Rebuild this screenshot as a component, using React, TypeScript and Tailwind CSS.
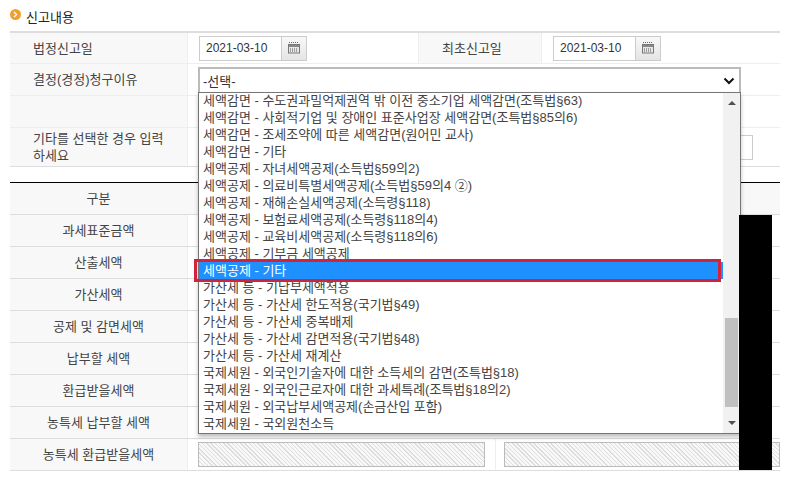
import React from 'react'

const options = [
	'세액감면 - 수도권과밀억제권역 밖 이전 중소기업 세액감면(조특법§63)',
	'세액감면 - 사회적기업 및 장애인 표준사업장 세액감면(조특법§85의6)',
	'세액감면 - 조세조약에 따른 세액감면(원어민 교사)',
	'세액감면 - 기타',
	'세액공제 - 자녀세액공제(소득법§59의2)',
	'세액공제 - 의료비특별세액공제(소득법§59의4 ②)',
	'세액공제 - 재해손실세액공제(소득령§118)',
	'세액공제 - 보험료세액공제(소득령§118의4)',
	'세액공제 - 교육비세액공제(소득령§118의6)',
	'세액공제 - 기부금 세액공제',
	'세액공제 - 기타',
	'가산세 등 - 기납부세액적용',
	'가산세 등 - 가산세 한도적용(국기법§49)',
	'가산세 등 - 가산세 중복배제',
	'가산세 등 - 가산세 감면적용(국기법§48)',
	'가산세 등 - 가산세 재계산',
	'국제세원 - 외국인기술자에 대한 소득세의 감면(조특법§18)',
	'국제세원 - 외국인근로자에 대한 과세특례(조특법§18의2)',
	'국제세원 - 외국납부세액공제(손금산입 포함)',
	'국제세원 - 국외원천소득',
]

const amountRows = ['과세표준금액', '산출세액', '가산세액', '공제 및 감면세액', '납부할 세액', '환급받을세액', '농특세 납부할 세액']

const CalendarIcon = () => (
	<svg width="12" height="12" viewBox="0 0 12 12" fill="none">
		<path d="M1 0.5h10" stroke="#666" strokeDasharray="1 1" />
		<rect x="0.5" y="2.5" width="11" height="8.5" fill="#e8e8e8" stroke="#777" />
		<rect x="1" y="3" width="10" height="2" fill="#888" />
		<path d="M2 7h8M2 9h8" stroke="#555" strokeDasharray="1 1" />
	</svg>
)

const DateField = () => (
	<div className="flex h-[25px]">
		<div className="flex w-[83px] items-center border border-[#ccc] bg-white pl-[6px] text-[12px] text-[#333]">2021-03-10</div>
		<div className="flex w-[25px] items-center justify-center border border-l-0 border-[#ccc] bg-[linear-gradient(#f8f8f8,#e4e4e4)]">
			<CalendarIcon />
		</div>
	</div>
)

const Label = ({ children, className = '' }: { children?: React.ReactNode; className?: string }) => (
	<div className={`flex items-center bg-[#f8f8f8] text-[#444] ${className}`}>{children}</div>
)

export default function App() {
	return (
		<div className="relative h-[480px] w-[786px] overflow-hidden bg-white font-['Liberation_Sans','Noto_Sans_CJK_KR',sans-serif] text-[13px] leading-[17px]">
			{/* Title */}
			<div className="flex h-[31px] items-center pl-[10px] pt-[3px] text-[#222]">
				<span className="-mt-[5px] flex h-[11px] w-[11px] items-center justify-center rounded-full bg-[#f0a030]">
					<svg width="7" height="7" viewBox="0 0 7 7" fill="none">
						<path d="M2 1l2.5 2.5L2 6" stroke="#fff" strokeWidth="1.4" />
					</svg>
				</span>
				<span className="ml-[5px]">신고내용</span>
			</div>

			{/* Report form */}
			<div className="ml-[10px] w-[770px] border-t-2 border-[#ddd]">
				<div className="flex h-[31px] border-b border-[#eee]">
					<Label className="w-[177px] pl-[23px]">법정신고일</Label>
					<div className="flex w-[231px] items-center border-l border-[#eee] pl-[11px]">
						<DateField />
					</div>
					<Label className="w-[123px] border-l border-[#eee] pl-[23px]">최초신고일</Label>
					<div className="flex flex-1 items-center border-l border-[#eee] pl-[11px]">
						<DateField />
					</div>
				</div>
				<div className="flex h-[32px] border-b border-[#eee]">
					<Label className="w-[177px] pl-[23px]">결정(경정)청구이유</Label>
					<div className="flex flex-1 items-center border-l border-[#eee] pl-[10px]" />
				</div>
				<div className="flex h-[32px] border-b border-[#eee]">
					<Label className="w-[177px]" />
					<div className="flex-1 border-l border-[#eee]" />
				</div>
				<div className="flex h-[39px] border-b border-[#ddd]">
					<Label className="w-[177px] px-[23px]">기타를 선택한 경우 입력하세요</Label>
					<div className="flex flex-1 items-center border-l border-[#eee] pl-[10px]">
						<div className="h-[25px] w-[555px] border border-[#ccc] bg-white" />
					</div>
				</div>
			</div>

			{/* Amount table */}
			<div className="ml-[10px] mt-[15px] w-[770px] border-t border-black">
				<div className="flex h-[32px] border-b border-[#ddd]">
					<Label className="w-[177px] justify-center">구분</Label>
					<div className="flex-1 bg-[#f8f8f8]" />
				</div>
				{amountRows.map((name) => (
					<div key={name} className="flex h-[32px] border-b border-[#ddd]">
						<Label className="w-[177px] justify-center">{name}</Label>
						<div className="flex-1 border-l border-[#eee]" />
					</div>
				))}
				<div className="flex h-[32px] border-b border-[#ddd]">
					<Label className="w-[177px] justify-center">농특세 환급받을세액</Label>
					<div className="flex flex-1 items-center border-l border-[#eee] pl-[10px]">
						<div className="h-[25px] w-[287px] border border-[#bbb] bg-[repeating-linear-gradient(45deg,#ddd_0,#ddd_1px,#f8f8f8_1px,#f8f8f8_3px)]" />
						<div className="ml-[10px] h-full border-l border-[#eee]" />
						<div className="ml-[8px] h-[25px] flex-1 border border-[#bbb] bg-[repeating-linear-gradient(45deg,#ddd_0,#ddd_1px,#f8f8f8_1px,#f8f8f8_3px)]" />
					</div>
				</div>
			</div>

			{/* Open select */}
			<div className="absolute left-[198px] top-[67px] flex h-[26px] w-[543px] items-center justify-between border-2 border-b-0 border-[#bbb] bg-white pl-[3px] pr-[4px] text-[#333]">
				<span>-선택-</span>
				<svg width="12" height="8" viewBox="0 0 12 8" fill="none">
					<path d="M1.5 1.5L6 6l4.5-4.5" stroke="#111" strokeWidth="2" />
				</svg>
			</div>
			<div className="absolute left-[198px] top-[92px] flex h-[342px] w-[543px] border border-[#767676] bg-white shadow-[0_3px_4px_rgba(0,0,0,0.25)]">
				<div className="w-[524px] overflow-hidden">
					{options.map((option, i) => (
						<div
							key={option}
							className={`h-[17px] whitespace-nowrap pl-[4px] leading-[17px] first:-mt-[1px] ${i === 10 ? 'bg-[#1e90ff] text-white' : 'text-[#444]'}`}
						>
							{option}
						</div>
					))}
				</div>
				<div className="relative flex-1 bg-[#f1f1f1]">
					<span className="absolute left-[5px] top-[8px] h-0 w-0 border-x-[4px] border-b-[4px] border-x-transparent border-b-[#505050]" />
					<div className="absolute left-[2px] top-[225px] h-[89px] w-[13px] bg-[#c0c0c0]" />
					<span className="absolute bottom-[8px] left-[5px] h-0 w-0 border-x-[4px] border-t-[4px] border-x-transparent border-t-[#505050]" />
				</div>
			</div>

			{/* Annotation and redaction laid over the capture */}
			<div className="absolute left-[194px] top-[259px] h-[23px] w-[527px] border-[3px] border-[#d2233c]" />
			<div className="absolute left-[739px] top-[215px] h-[255px] w-[33px] bg-black" />
		</div>
	)
}
